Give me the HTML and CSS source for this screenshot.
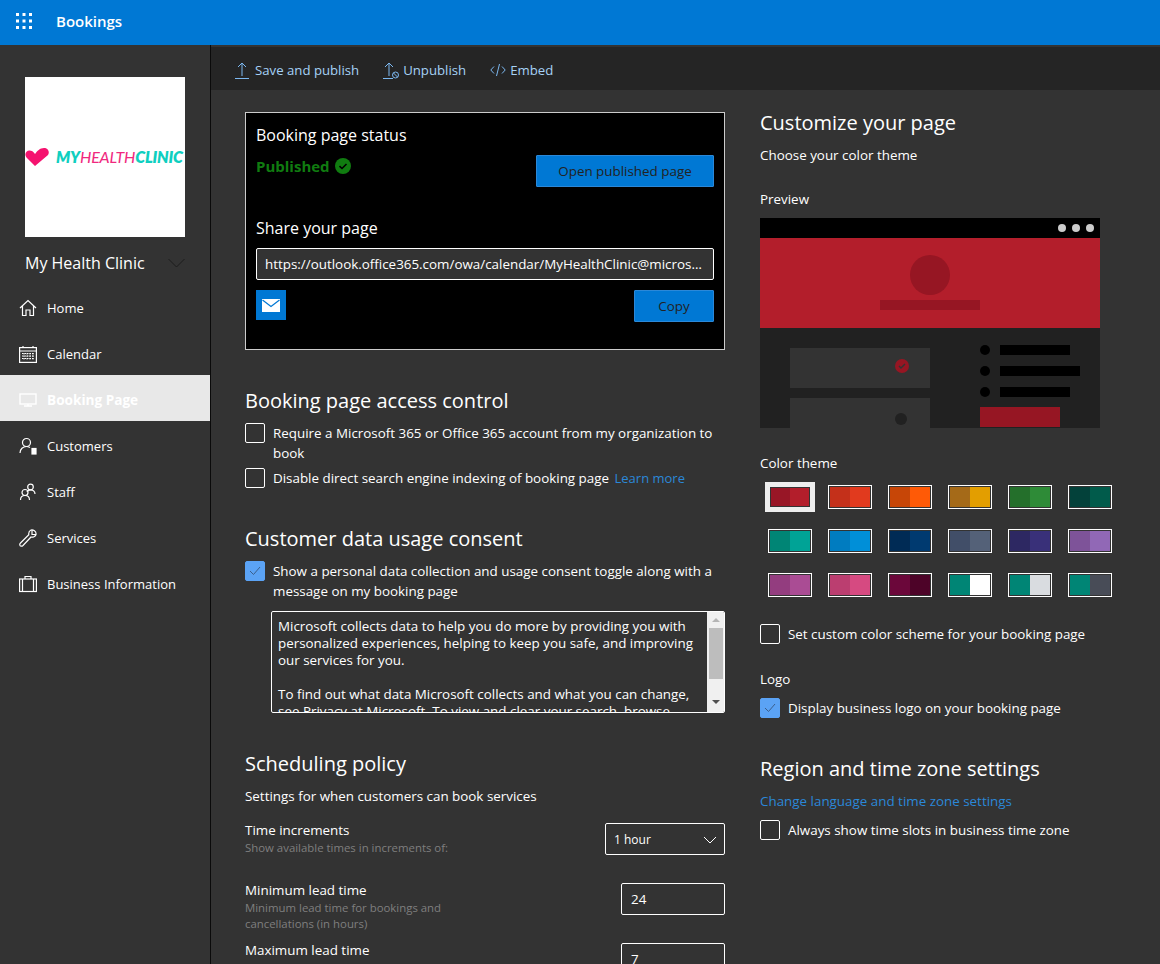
FILE: index.html
```html
<!DOCTYPE html>
<html lang="en">
  <head>
    <meta charset="UTF-8" />
    <title>Bookings</title>
    <link rel="stylesheet" href="styles.css">
  </head>
  <body>
    <div class="topbar">
      <svg class="waffle" width="16" height="16" viewBox="0 0 16 16" fill="#fff">
        <rect x="0" y="0" width="3" height="3" /><rect x="6.5" y="0" width="3" height="3" /><rect x="13" y="0" width="3" height="3" />
        <rect x="0" y="6.5" width="3" height="3" /><rect x="6.5" y="6.5" width="3" height="3" /><rect x="13" y="6.5" width="3" height="3" />
        <rect x="0" y="13" width="3" height="3" /><rect x="6.5" y="13" width="3" height="3" /><rect x="13" y="13" width="3" height="3" />
      </svg>
      <span class="app-name">Bookings</span>
    </div>

    <div class="layout">
      <div class="sidebar">
        <div class="logo-box">
          <svg class="logo-heart" width="24" height="18" viewBox="0 0 24 18">
            <path d="M10 18 L1.5 9.5 C-1 6.5 1 2.5 4.5 2.5 C6.5 2.5 8.5 3.5 10 6 C12 3 15 0 19 0 C23 0 25 4 23 7 Z" fill="#f5136f" />
          </svg>
          <span class="logo-text"><b>MY</b><i>HEALTH</i><b>CLINIC</b></span>
        </div>
        <div class="business">
          <span>My Health Clinic</span>
          <svg width="17" height="10" viewBox="0 0 17 10" fill="none" stroke="#1c1c1c" stroke-width="1"><path d="M0.5 1 L8.5 9 L16.5 1" /></svg>
        </div>
        <div class="nav">
          <div class="nav-item">
            <svg width="18" height="18" viewBox="0 0 18 18" fill="none" stroke="#fff" stroke-width="1.2"><path d="M1 9 L9 1.5 L17 9 M3.5 7 V16.5 H7 V11 H11 V16.5 H14.5 V7" /></svg>
            <span>Home</span>
          </div>
          <div class="nav-item">
            <svg width="18" height="18" viewBox="0 0 18 18" fill="none" stroke="#fff" stroke-width="1.2"><rect x="0.6" y="2.6" width="16.8" height="14.8" /><path d="M0.6 6 H17.4 M4 1 V3 M14 1 V3" /><path d="M3 8.5 H15 M3 11 H15 M3 13.5 H15 M5 8 V15 M8 8 V15 M11 8 V15 M14 8 V15" stroke-width="1" stroke-dasharray="1.5 1" /></svg>
            <span>Calendar</span>
          </div>
          <div class="nav-item active">
            <svg width="18" height="18" viewBox="0 0 18 18" fill="none" stroke="#fff" stroke-width="1.4"><rect x="1" y="3" width="16" height="10" /><path d="M5 15 H13 M9 13 V15" /></svg>
            <span>Booking Page</span>
          </div>
          <div class="nav-item">
            <svg width="18" height="18" viewBox="0 0 18 18" fill="none" stroke="#fff" stroke-width="1.2"><circle cx="7.5" cy="5.5" r="4" /><path d="M1 16 C1 12 4 9.5 7.5 9.5 C9 9.5 10 10 11 10.5" /><rect x="13" y="11.5" width="4" height="5.5" fill="#fff" /></svg>
            <span>Customers</span>
          </div>
          <div class="nav-item">
            <svg width="18" height="18" viewBox="0 0 18 18" fill="none" stroke="#fff" stroke-width="1.2"><circle cx="11.5" cy="4" r="2.8" /><path d="M8 9 C8.5 7.5 10 6.8 11.5 6.8 C14 6.8 16 8.5 16 11" /><circle cx="6" cy="9.5" r="3" /><path d="M1.5 17 C1.5 14 3.5 12.5 6 12.5 C8.5 12.5 10.5 14 10.5 17" /></svg>
            <span>Staff</span>
          </div>
          <div class="nav-item">
            <svg width="18" height="18" viewBox="0 0 18 18" fill="none" stroke="#fff" stroke-width="1.2"><path d="M12 1 C14 0.5 17.5 2 17 5.5 C16.5 7.5 14 8.5 12 8 L4 16.5 C3 17.5 1 17.5 0.8 16 C0.6 15 1 14.5 1.5 14 L9.8 5.8 C9.5 4 10 2 12 1 Z M13 1.5 V5.5 H17" /></svg>
            <span>Services</span>
          </div>
          <div class="nav-item">
            <svg width="18" height="18" viewBox="0 0 18 18" fill="none" stroke="#fff" stroke-width="1.2"><rect x="0.6" y="4" width="16.8" height="12.5" /><path d="M6 4 V1.5 H12 V4 M3.5 4 V16.5 M14.5 4 V16.5" /></svg>
            <span>Business Information</span>
          </div>
        </div>
      </div>

      <div class="content">
        <div class="toolbar">
          <div class="tool">
            <svg width="14" height="17" viewBox="0 0 14 17" fill="none" stroke="#7cb8f0" stroke-width="1"><path d="M7 14 V1 M3 5 L7 1 L11 5 M0 16.5 H14" /></svg>
            <span>Save and publish</span>
          </div>
          <div class="tool tool-tight">
            <svg width="16" height="17" viewBox="0 0 16 17" fill="none" stroke="#7cb8f0" stroke-width="1"><path d="M6 14 V1 M2 5 L6 1 L10 5 M0 16.5 H10" /><circle cx="12.5" cy="13" r="3" /><path d="M10.5 11 L14.5 15" /></svg>
            <span>Unpublish</span>
          </div>
          <div class="tool tool-tight">
            <svg width="16" height="14" viewBox="0 0 16 14" fill="none" stroke="#7cb8f0" stroke-width="1"><path d="M4 3.5 L0.8 7 L4 10.5 M12 3.5 L15.2 7 L12 10.5 M9.5 1 L6.5 13" /></svg>
            <span>Embed</span>
          </div>
        </div>

        <div class="columns">
          <div class="col-left">
            <div class="status-card">
              <div class="card-title">Booking page status</div>
              <div class="status-row">
                <div class="published">
                  <span>Published</span>
                  <svg width="16" height="16" viewBox="0 0 16 16"><circle cx="8" cy="8" r="8" fill="#107c10" /><path d="M4.5 8.2 L7 10.5 L11.5 6" fill="none" stroke="#000" stroke-width="1.6" /></svg>
                </div>
                <div class="btn btn-open">Open published page</div>
              </div>
              <div class="card-title share-title">Share your page</div>
              <div class="url-box">https://outlook.office365.com/owa/calendar/MyHealthClinic@microsoft.onmicrosoft.com/bookings/</div>
              <div class="share-row">
                <div class="mail-tile">
                  <svg width="18" height="13" viewBox="0 0 18 13"><rect width="18" height="13" fill="#fff" /><path d="M0.5 1 L9 7.5 L17.5 1" fill="none" stroke="#0078d4" stroke-width="1.2" /></svg>
                </div>
                <div class="btn btn-copy">Copy</div>
              </div>
            </div>

            <h2 class="section-title access-title">Booking page access control</h2>
            <div class="check-row">
              <span class="checkbox"></span>
              <span>Require a Microsoft 365 or Office 365 account from my organization to book</span>
            </div>
            <div class="check-row check-second">
              <span class="checkbox"></span>
              <span>Disable direct search engine indexing of booking page <a class="link learn-more">Learn more</a></span>
            </div>

            <h2 class="section-title consent-title">Customer data usage consent</h2>
            <div class="check-row">
              <span class="checkbox checked">
                <svg width="12" height="10" viewBox="0 0 12 10" fill="none" stroke="#3b5f8c" stroke-width="1"><path d="M1 5 L4.5 8.5 L11 1" /></svg>
              </span>
              <span>Show a personal data collection and usage consent toggle along with a message on my booking page</span>
            </div>
            <div class="consent-box">
              <div class="consent-text">
                Microsoft collects data to help you do more by providing you with personalized experiences, helping to keep you safe, and improving our services for you.<br><br>
                To find out what data Microsoft collects and what you can change, see Privacy at Microsoft. To view and clear your search, browse, and location history, go to your privacy dashboard.
              </div>
              <div class="scrollbar">
                <span class="arrow-up"></span>
                <span class="thumb"></span>
                <span class="arrow-down"></span>
              </div>
            </div>

            <h2 class="section-title policy-title">Scheduling policy</h2>
            <div class="policy-sub">Settings for when customers can book services</div>

            <div class="policy-row row-time">
              <div class="policy-label">
                <div>Time increments</div>
                <div class="hint">Show available times in increments of:</div>
              </div>
              <div class="select">
                <span>1 hour</span>
                <svg width="14" height="8" viewBox="0 0 14 8" fill="none" stroke="#fff" stroke-width="1"><path d="M1 1 L7 7 L13 1" /></svg>
              </div>
            </div>
            <div class="policy-row row-min">
              <div class="policy-label">
                <div>Minimum lead time</div>
                <div class="hint">Minimum lead time for bookings and cancellations (in hours)</div>
              </div>
              <div class="num-input">24</div>
            </div>
            <div class="policy-row row-max">
              <div class="policy-label">
                <div>Maximum lead time</div>
                <div class="hint">Maximum number of days in advance of booking</div>
              </div>
              <div class="num-input">7</div>
            </div>
          </div>

          <div class="col-right">
            <h2 class="section-title customize-title">Customize your page</h2>
            <div class="theme-sub">Choose your color theme</div>
            <div class="preview-label">Preview</div>
            <svg class="preview" width="340" height="210" viewBox="0 0 340 210">
              <rect width="340" height="210" fill="#212121" />
              <rect width="340" height="20" fill="#000" />
              <circle cx="302" cy="10" r="4" fill="#ccc" /><circle cx="316" cy="10" r="4" fill="#ccc" /><circle cx="330" cy="10" r="4" fill="#ccc" />
              <rect y="20" width="340" height="90" fill="#b31e2b" />
              <circle cx="170" cy="57" r="20" fill="#961623" />
              <rect x="120" y="82" width="100" height="10" fill="#961623" />
              <rect x="30" y="130" width="140" height="40" fill="#333" />
              <circle cx="142" cy="148" r="7" fill="#961623" />
              <path d="M139 148 L141 150 L145 146" fill="none" stroke="#333" stroke-width="1.4" />
              <rect x="30" y="180" width="140" height="30" fill="#333" />
              <circle cx="141" cy="201" r="6" fill="#212121" />
              <circle cx="225" cy="132" r="5" fill="#000" /><rect x="240" y="127" width="70" height="10" fill="#000" />
              <circle cx="225" cy="153" r="5" fill="#000" /><rect x="240" y="148" width="80" height="10" fill="#000" />
              <circle cx="225" cy="174" r="5" fill="#000" /><rect x="240" y="169" width="70" height="10" fill="#000" />
              <rect x="220" y="189" width="80" height="20" fill="#961623" />
            </svg>

            <div class="theme-label">Color theme</div>
            <div class="swatches">
              <div class="swatch selected"><i style="background:#981626"></i><i style="background:#b31e2b"></i></div>
              <div class="swatch"><i style="background:#c4301a"></i><i style="background:#e13a1e"></i></div>
              <div class="swatch"><i style="background:#c74607"></i><i style="background:#ff5a06"></i></div>
              <div class="swatch"><i style="background:#a56a18"></i><i style="background:#e39e00"></i></div>
              <div class="swatch"><i style="background:#246f2b"></i><i style="background:#2e8b37"></i></div>
              <div class="swatch"><i style="background:#03413a"></i><i style="background:#015b4b"></i></div>
              <div class="swatch"><i style="background:#008575"></i><i style="background:#00a396"></i></div>
              <div class="swatch"><i style="background:#007cc0"></i><i style="background:#008fd8"></i></div>
              <div class="swatch"><i style="background:#002b55"></i><i style="background:#003a70"></i></div>
              <div class="swatch"><i style="background:#414e68"></i><i style="background:#546178"></i></div>
              <div class="swatch"><i style="background:#2d2862"></i><i style="background:#393079"></i></div>
              <div class="swatch"><i style="background:#7e5399"></i><i style="background:#9168b6"></i></div>
              <div class="swatch"><i style="background:#933d7f"></i><i style="background:#aa4c94"></i></div>
              <div class="swatch"><i style="background:#bb3e70"></i><i style="background:#d64a81"></i></div>
              <div class="swatch"><i style="background:#6b073a"></i><i style="background:#4d0328"></i></div>
              <div class="swatch"><i style="background:#008575"></i><i style="background:#fff"></i></div>
              <div class="swatch"><i style="background:#008575"></i><i style="background:#d9dce0"></i></div>
              <div class="swatch"><i style="background:#008575"></i><i style="background:#484c57"></i></div>
            </div>

            <div class="check-row custom-scheme">
              <span class="checkbox"></span>
              <span>Set custom color scheme for your booking page</span>
            </div>

            <div class="logo-label">Logo</div>
            <div class="check-row logo-check">
              <span class="checkbox checked">
                <svg width="12" height="10" viewBox="0 0 12 10" fill="none" stroke="#3b5f8c" stroke-width="1"><path d="M1 5 L4.5 8.5 L11 1" /></svg>
              </span>
              <span>Display business logo on your booking page</span>
            </div>

            <h2 class="section-title region-title">Region and time zone settings</h2>
            <a class="link region-link">Change language and time zone settings</a>
            <div class="check-row region-check">
              <span class="checkbox"></span>
              <span>Always show time slots in business time zone</span>
            </div>
          </div>
        </div>
      </div>
    </div>
  </body>
</html>
```

FILE: styles.css
```css
:root {
  --blue-color: #0078d4;
  --bg-color: #333333;
  --toolbar-color: #252525;
  --link-color: #2b88d8;
  --hint-color: #7f7f7f;
  --font-ui: "Open Sans", "Noto Sans", Arial, sans-serif;
}

html,
body {
  height: 100%;
}

body {
  margin: 0;
  overflow: hidden;
  background-color: var(--bg-color);
  color: #ffffff;
  font-family: var(--font-ui);
  font-size: 13.4px;
  line-height: 20px;
}

.topbar {
  box-sizing: border-box;
  height: 45px;
  background-color: var(--blue-color);
  display: flex;
  align-items: center;
  padding: 0 0 3px 16px;
}

.waffle {
  margin-right: 24px;
}

.app-name {
  font-size: 15px;
  font-weight: 600;
}

.layout {
  display: flex;
  height: 919px;
}

.sidebar {
  width: 210px;
  flex-shrink: 0;
  border-right: 1px solid #0a0a0a;
  padding-top: 32px;
}

.logo-box {
  width: 160px;
  height: 160px;
  margin-left: 25px;
  background-color: #ffffff;
  display: flex;
  align-items: center;
  overflow: hidden;
}

.logo-heart {
  flex-shrink: 0;
  margin-right: 7px;
}

.logo-text {
  color: #0fcfc0;
  font-family: "Lato", sans-serif;
  font-size: 16px;
  font-style: italic;
  line-height: 1;
  white-space: nowrap;
  letter-spacing: -0.2px;
}

.logo-text b {
  font-weight: 800;
}

.logo-text i {
  color: #f0287e;
  font-weight: 400;
}

.business {
  display: flex;
  align-items: center;
  justify-content: space-between;
  width: 160px;
  margin: 14px 0 8px 25px;
  height: 24px;
  font-size: 16px;
}

.nav-item {
  box-sizing: border-box;
  height: 46px;
  display: flex;
  align-items: center;
  padding: 4px 0 0 19px;
  font-size: 13px;
}

.nav-item svg {
  margin-right: 10px;
}

.nav-item.active {
  background-color: #e8e8e8;
  font-size: 13.6px;
  font-weight: 700;
}

.content {
  flex: 1;
  min-width: 0;
  padding-top: 2px;
}

.toolbar {
  box-sizing: border-box;
  height: 43px;
  background-color: var(--toolbar-color);
  display: flex;
  align-items: center;
  padding: 3px 0 0 24px;
  color: #a6d2f7;
  font-size: 13.2px;
}

.tool {
  display: flex;
  align-items: center;
  margin-right: 24px;
}

.tool svg {
  margin-right: 6px;
}

.tool-tight svg {
  margin-right: 4px;
}

.columns {
  display: flex;
  padding: 22px 0 0 34px;
}

.col-left {
  width: 480px;
  flex-shrink: 0;
}

.col-right {
  width: 352px;
  margin-left: 35px;
}

.status-card {
  box-sizing: border-box;
  height: 238px;
  background-color: #000000;
  border: 1px solid #cccccc;
  padding: 10px;
}

.card-title {
  font-size: 16px;
  line-height: 24px;
}

.status-row {
  display: flex;
  justify-content: space-between;
  height: 69px;
}

.published {
  display: flex;
  align-items: center;
  height: 20px;
  margin-top: 9px;
  color: #107c10;
  font-size: 15px;
  font-weight: 700;
}

.published svg {
  margin-left: 5px;
}

.btn {
  box-sizing: border-box;
  background-color: var(--blue-color);
  border: 1px solid #2b88d8;
  border-radius: 1px;
  color: #222222;
  height: 32px;
  display: flex;
  align-items: center;
  justify-content: center;
}

.btn-open {
  width: 178px;
  margin-top: 8px;
}

.btn-copy {
  width: 80px;
}

.share-title {
  margin-bottom: 8px;
}

.url-box {
  box-sizing: border-box;
  height: 32px;
  line-height: 30px;
  padding: 0 8px;
  background-color: var(--bg-color);
  border: 1px solid #ffffff;
  border-radius: 2px;
  white-space: nowrap;
  overflow: hidden;
  text-overflow: ellipsis;
}

.share-row {
  display: flex;
  justify-content: space-between;
  margin-top: 10px;
}

.mail-tile {
  width: 30px;
  height: 30px;
  background-color: var(--blue-color);
  display: flex;
  align-items: center;
  justify-content: center;
}

.section-title {
  margin: 0;
  font-size: 20px;
  font-weight: 400;
  line-height: 26px;
}

.access-title,
.consent-title,
.policy-title {
  margin: 38px 0 9px;
}

.customize-title {
  line-height: 22px;
}

.check-row {
  display: flex;
  gap: 8px;
}

.check-second {
  margin-top: 5px;
}

.checkbox {
  box-sizing: border-box;
  width: 20px;
  height: 20px;
  flex-shrink: 0;
  border: 1px solid #ffffff;
  border-radius: 2px;
  display: flex;
  align-items: center;
  justify-content: center;
}

.checkbox.checked {
  background-color: #5ba3f5;
  border-color: #5ba3f5;
}

.link {
  color: var(--link-color);
}

.learn-more {
  margin-left: 2px;
  font-size: 13px;
}

.consent-box {
  box-sizing: border-box;
  display: flex;
  height: 102px;
  margin: 10px 0 0 26px;
  border: 1px solid #ffffff;
  border-radius: 2px;
  overflow: hidden;
}

.consent-text {
  flex: 1;
  padding: 6px 14px 0 6px;
  line-height: 17px;
}

.scrollbar {
  width: 17px;
  flex-shrink: 0;
  background-color: #f0f0f0;
  display: flex;
  flex-direction: column;
  align-items: center;
}

.thumb {
  width: 14px;
  height: 51px;
  background-color: #bdbdbd;
  margin-top: 6px;
}

.arrow-up,
.arrow-down {
  width: 0;
  height: 0;
  border-left: 4px solid transparent;
  border-right: 4px solid transparent;
}

.arrow-up {
  margin-top: 6px;
  border-bottom: 4px solid #b5b5b5;
}

.arrow-down {
  margin-top: 21px;
  border-top: 4px solid #505050;
}

.policy-sub {
  margin-bottom: 14px;
}

.policy-row {
  display: flex;
  justify-content: space-between;
  align-items: flex-start;
}

.policy-label {
  line-height: 20px;
}

.row-min .policy-label,
.row-max .policy-label {
  width: 230px;
}

.hint {
  color: var(--hint-color);
  font-size: 11.4px;
  line-height: 16px;
}

.row-time {
  height: 60px;
}

.row-min {
  height: 60px;
}

.select {
  box-sizing: border-box;
  width: 120px;
  height: 32px;
  margin-top: 3px;
  border: 1px solid #ffffff;
  border-radius: 2px;
  display: flex;
  align-items: center;
  justify-content: space-between;
  padding: 2px 7px 0 8px;
  font-size: 12px;
}

.num-input {
  box-sizing: border-box;
  width: 104px;
  height: 32px;
  margin-top: 3px;
  border: 1px solid #ffffff;
  border-radius: 2px;
  line-height: 31px;
  padding-left: 9px;
}

.theme-sub {
  margin-top: 11px;
}

.preview-label {
  margin-top: 24px;
}

.preview {
  display: block;
  margin-top: 9px;
}

.theme-label {
  margin-top: 25px;
}

.swatches {
  display: grid;
  grid-template-columns: repeat(6, 60px);
  grid-auto-rows: 44px;
  margin-top: 2px;
}

.swatch {
  box-sizing: border-box;
  width: 44px;
  height: 24px;
  border: 1px solid #ffffff;
  padding: 1px;
  background-color: var(--bg-color);
  display: flex;
  align-self: center;
  justify-self: center;
}

.swatch i {
  flex: 1;
}

.swatch.selected {
  width: 50px;
  height: 30px;
  border: 5px solid #eeeeee;
}

.custom-scheme {
  margin-top: 17px;
}

.logo-label {
  margin-top: 25px;
}

.logo-check {
  margin-top: 9px;
}

.region-title {
  margin-top: 38px;
}

.region-link {
  display: block;
  margin-top: 9px;
}

.region-check {
  margin-top: 9px;
}
```
